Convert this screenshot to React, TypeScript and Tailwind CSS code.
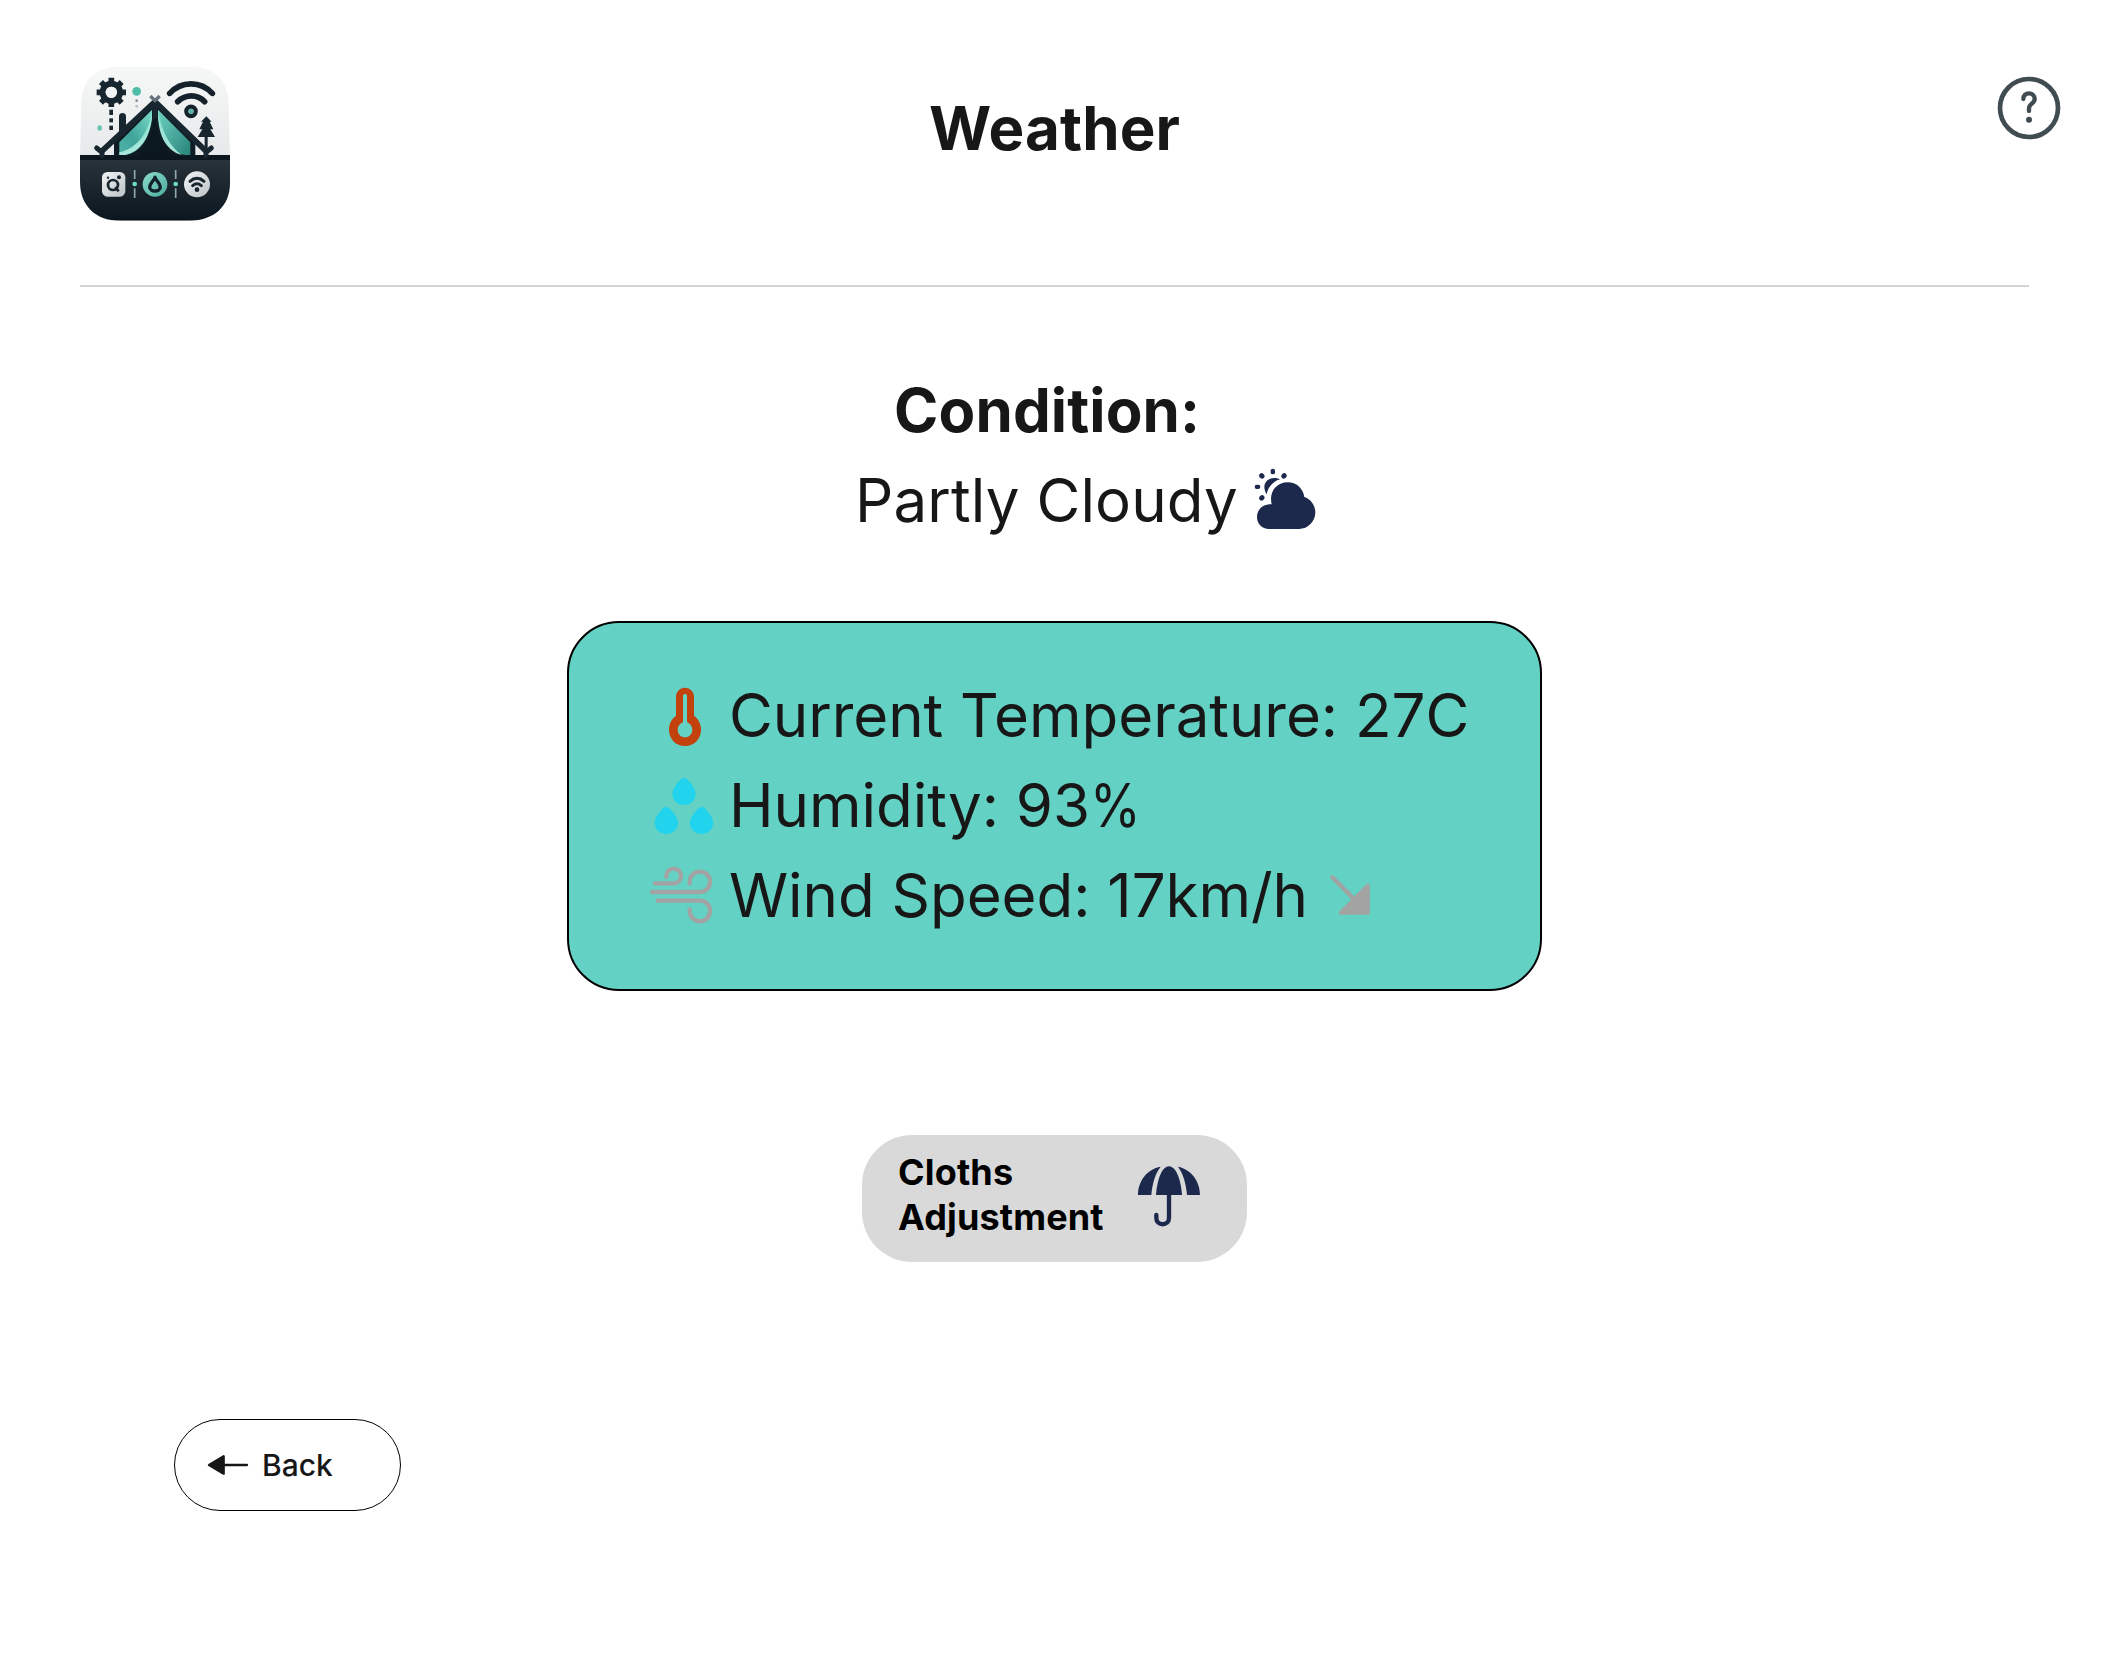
import React from "react";

function Logo() {
  return (
    <svg viewBox="27 27 456 474" className="h-[158px] w-[152px]">
      <defs>
        <linearGradient id="sky" x1="0" y1="0" x2="0" y2="1">
          <stop offset="0" stopColor="#f7f8f8" />
          <stop offset="1" stopColor="#e6e9ea" />
        </linearGradient>
        <linearGradient id="ground" x1="0" y1="0" x2="0" y2="1">
          <stop offset="0" stopColor="#2b353d" />
          <stop offset="1" stopColor="#0a151d" />
        </linearGradient>
        <linearGradient id="tentL" x1="1" y1="0" x2="0" y2="1">
          <stop offset="0" stopColor="#7edccb" />
          <stop offset="0.6" stopColor="#3fa59c" />
          <stop offset="1" stopColor="#4fb3a8" />
        </linearGradient>
        <linearGradient id="tentR" x1="0" y1="0" x2="1" y2="1">
          <stop offset="0" stopColor="#6fd3c3" />
          <stop offset="1" stopColor="#278379" />
        </linearGradient>
        <linearGradient id="flap" x1="0" y1="0" x2="0" y2="1">
          <stop offset="0" stopColor="#8ce0d0" />
          <stop offset="1" stopColor="#a9e8da" />
        </linearGradient>
        <linearGradient id="mint" x1="0" y1="0" x2="1" y2="1">
          <stop offset="0" stopColor="#8bdccb" />
          <stop offset="1" stopColor="#4bab9c" />
        </linearGradient>
        <linearGradient id="silver" x1="0" y1="0" x2="1" y2="1">
          <stop offset="0" stopColor="#f3f5f6" />
          <stop offset="1" stopColor="#bcc2c6" />
        </linearGradient>
        <clipPath id="badge">
          <path d="M150 35H360C435 35 476 75 476 150L480 305V385C480 455 430 497 360 497H150C75 497 30 450 30 380V305L34 150C34 75 75 35 150 35Z" />
        </clipPath>
      </defs>
      <g clipPath="url(#badge)">
        <rect x="27" y="27" width="456" height="280" fill="url(#sky)" />
        <rect x="27" y="300" width="456" height="200" fill="url(#ground)" />
        <rect x="27" y="300" width="456" height="15" fill="#0b161f" />
      </g>
      {/* gear with its dashed stem */}
      <circle cx="124" cy="112" r="26" fill="none" stroke="#18262f" strokeWidth="18" />
      <g stroke="#18262f" strokeWidth="17" strokeLinecap="butt">
        <path d="M124 84V68M124 140V156M96 112H80M152 112H168M104 92L93 81M144 92L155 81M104 132L93 143M144 132L155 143" />
      </g>
      <circle cx="124" cy="112" r="17" fill="#f1f3f4" />
      <g fill="#18262f">
        <rect x="118" y="164" width="11" height="16" />
        <rect x="118" y="190" width="11" height="12" />
        <rect x="118" y="212" width="11" height="13" />
      </g>
      <circle cx="200" cy="109" r="13" fill="#4fbda9" />
      <circle cx="200" cy="137" r="4" fill="#82909a" />
      <circle cx="200" cy="154" r="4" fill="#b4bdc2" />
      <ellipse cx="89" cy="219" rx="7" ry="8" fill="#6cc5b4" />
      {/* wifi waves */}
      <g fill="none" stroke="#15222b" strokeLinecap="round" strokeWidth="17">
        <path d="M299 115C334 77 392 77 427 115" />
        <path d="M323 140C347 117 382 117 404 140" />
        <circle cx="363" cy="169" r="14" strokeWidth="13" />
      </g>
      <circle cx="363" cy="169" r="8" fill="#5db4a6" />
      {/* tent */}
      <path d="M147 232V184C147 171 168 171 168 184V212Z" fill="#18262f" />
      <path d="M255 140L132 262V302H376V262Z" fill="#101c24" />
      <path d="M246 164L148 262V300H165C218 290 246 235 246 164Z" fill="url(#tentL)" />
      <path d="M246 164V190C240 245 212 292 165 300H148V292C205 280 240 225 246 164Z" fill="url(#flap)" />
      <path d="M264 164L361 262V300H345C292 290 264 235 264 164Z" fill="url(#tentR)" />
      <path d="M264 164C272 225 300 275 335 300C285 285 262 235 264 164Z" fill="url(#flap)" />
      <path d="M255 188C248 240 226 280 200 301H310C282 280 262 240 255 188Z" fill="#0c1820" />
      <g fill="none" stroke="#18262f" strokeWidth="17">
        <path d="M94 290L255 140L410 290" />
        <path d="M255 140V190" strokeWidth="13" />
      </g>
      <path d="M241 123L258 140M269 123L252 140" stroke="#66737b" strokeWidth="10" />
      <path d="M80 279L96 292V302M424 279L408 292V302" fill="none" stroke="#18262f" strokeWidth="15" strokeLinecap="round" />
      {/* pine */}
      <g fill="#18262f">
        <path d="M409 184L425 200H419L430 223H421L435 246H383L397 223H388L399 200H393Z" />
        <rect x="404" y="240" width="9" height="45" />
      </g>
      {/* bottom badges */}
      <rect x="96" y="351" width="70" height="74" rx="16" fill="url(#silver)" />
      <circle cx="129" cy="390" r="15" fill="none" stroke="#18262f" strokeWidth="8" />
      <path d="M136 396L146 409" stroke="#18262f" strokeWidth="8" />
      <circle cx="147" cy="367" r="6" fill="#18262f" />
      <circle cx="114" cy="368" r="3.500" fill="#18262f" />
      <circle cx="255" cy="388" r="37" fill="url(#mint)" />
      <path d="M255 367C250 380 239 386 239 396C239 412 271 412 271 396C271 386 260 380 255 367Z" fill="none" stroke="#12202a" strokeWidth="10" strokeLinejoin="round" />
      <circle cx="381" cy="388" r="39" fill="url(#silver)" />
      <g fill="none" stroke="#18262f" strokeWidth="9" strokeLinecap="round">
        <path d="M360 379C373 367 389 367 402 379" />
        <path d="M368 392C376 385 386 385 394 392" />
      </g>
      <circle cx="381" cy="404" r="7" fill="#18262f" />
      {[194, 317].map((x) => (
        <g key={x}>
          <path d={`M${x} 345V372M${x} 400V429`} stroke="#8fa9ad" strokeWidth="5" />
          <circle cx={x} cy="387" r="7" fill="#6ddcc7" />
        </g>
      ))}
    </svg>
  );
}

function HelpIcon() {
  return (
    <svg viewBox="51 45 192 198" className="h-[66px] w-[64px]">
      <circle cx="147" cy="144" r="87" fill="none" stroke="#414b52" strokeWidth="14" />
      <path d="M130 117C130 106 137 100 147 100C157 100 164 107 164 117C164 131 147 131 147 145V153" fill="none" stroke="#414b52" strokeWidth="13" strokeLinecap="round" strokeLinejoin="round" />
      <circle cx="147" cy="179" r="9" fill="#414b52" />
    </svg>
  );
}

function CloudSunIcon() {
  return (
    <svg viewBox="1242 294 186 186" className="h-[62px] w-[62px]" fill="#1c284c">
      <rect x="1292" y="296" width="13" height="17" rx="6.5" />
      <rect x="1244" y="344" width="17" height="13" rx="6.5" />
      <rect x="-8.500" y="-7.500" width="17" height="15" rx="7" transform="translate(1265.500 317.500) rotate(45)" />
      <rect x="-8.500" y="-7.500" width="17" height="15" rx="7" transform="translate(1332 317.500) rotate(-45)" />
      <rect x="-8.500" y="-7.500" width="17" height="15" rx="7" transform="translate(1265.500 383.500) rotate(-45)" />
      <path d="M1280 373C1265 350 1275 324 1303 324C1310 324 1316 326 1320 328C1300 334 1284 350 1280 373Z" />
      <path d="M1295 403C1286 365 1310 337 1343 337C1369 337 1389 355 1393 381C1412 387 1426 406 1426 427C1426 455 1404 477 1377 477H1287C1266 477 1251 461 1251 441C1251 417 1270 402 1295 403Z" />
    </svg>
  );
}

function ThermometerIcon() {
  return (
    <svg viewBox="294 180 204 270" className="h-[90px] w-[68px] shrink-0">
      <path fillRule="evenodd" fill="#c2410c" d="M405 233C390 233 378 245 378 260V317C365 326 357 342 357 359C357 387 378 408 405 408C432 408 453 387 453 359C453 342 445 326 432 317V260C432 245 420 233 405 233ZM399 258C399 250 411 250 411 258V336C421 341 427 349 427 359C427 372 417 382 405 382C393 382 383 372 383 359C383 349 389 341 399 336Z" />
    </svg>
  );
}

function DropletsIcon() {
  return (
    <svg viewBox="294 450 204 270" className="h-[90px] w-[68px] shrink-0" fill="#22d3ee">
      <path d="M402 503C411 503 437 532 437 551C437 571 421 585 402 585C383 585 367 571 367 551C367 532 393 503 402 503Z" />
      <path d="M349 590C358 590 384 619 384 638C384 658 368 672 349 672C330 672 314 658 314 638C314 619 340 590 349 590Z" />
      <path d="M454.500 590C463.500 590 489.500 619 489.500 638C489.500 658 473.500 672 454.500 672C435.500 672 419.500 658 419.500 638C419.500 619 445.500 590 454.500 590Z" />
    </svg>
  );
}

function WindIcon() {
  return (
    <svg viewBox="294 720 204 270" className="h-[90px] w-[68px] shrink-0" fill="none" stroke="#a3a3a3" strokeWidth="13" strokeLinecap="round">
      <path d="M349 801V798C349 785 359 776 371 776C384 776 393 786 393 798C393 811 384 820 371 820H315" />
      <path d="M419 820V815C419 798 433 785 450 785C467 785 480 798 480 815C480 833 467 846 450 846H306" />
      <path d="M323 872H450C467 872 480 885 480 903C480 920 467 934 450 934C433 934 419 920 419 903V898" />
    </svg>
  );
}

function WindDirectionIcon() {
  return (
    <svg viewBox="864 720 132 270" className="h-[90px] w-[44px] shrink-0" fill="#a3a3a3" stroke="#a3a3a3" strokeLinecap="round" strokeLinejoin="round">
      <path d="M877 802L945 870" strokeWidth="13" />
      <path d="M983 828V908H903Z" strokeWidth="13" />
    </svg>
  );
}

function UmbrellaIcon() {
  return (
    <svg viewBox="861 135 192 189" className="h-[63px] w-[64px]" fill="#1c284c">
      <path d="M932 140C916 160 907 190 904 225H864C864 182 892 147 932 140Z" />
      <path d="M984 140C1024 148 1050 184 1050 225H1011C1008 190 999 160 984 140Z" />
      <path d="M918 225C921 182 935 139 957 139C979 139 993 182 996 225Z" />
      <path d="M957 222V294C957 319 919 319 919 294V285" fill="none" stroke="#1c284c" strokeWidth="13" strokeLinecap="round" />
    </svg>
  );
}

function BackArrowIcon() {
  return (
    <svg viewBox="141 162 126 66" className="h-[22px] w-[42px]" fill="#171717" stroke="#171717" strokeWidth="7" strokeLinecap="round" strokeLinejoin="round">
      <path d="M190 195H261" />
      <path d="M147 195L191 169V221Z" />
    </svg>
  );
}

function Reading({ icon, children }: { icon: React.ReactNode; children: React.ReactNode }) {
  return (
    <li className="flex h-[90px] items-center gap-[13px] tracking-[-0.04px] whitespace-nowrap">
      {icon}
      {children}
    </li>
  );
}

export default function App() {
  return (
    <div className="flex h-[1675px] w-[2125px] flex-col items-start overflow-hidden bg-white font-['Inter',sans-serif] text-[60px] leading-[90px] text-[#171717]">
      <header className="flex h-[285px] w-full items-start pr-[64px] pl-[79px]">
        <div className="mt-[64px] w-[850px]">
          <Logo />
        </div>
        <h1 className="mt-[83px] font-bold tracking-[0.15px]">Weather</h1>
        <button className="mt-[75px] ml-auto" aria-label="Help">
          <HelpIcon />
        </button>
      </header>
      <hr className="ml-[80px] h-[2px] w-[1949px] border-0 bg-[#d4d4d4]" />

      <section className="mt-[78px] ml-[855px]">
        <h2 className="ml-[39px] font-bold tracking-[0.12px]">Condition:</h2>
        <div className="flex items-start">
          <p className="w-[399px] tracking-[0.13px] whitespace-nowrap">Partly Cloudy</p>
          <div className="mt-[13px]">
            <CloudSunIcon />
          </div>
        </div>
      </section>

      <ul className="mt-[76px] ml-[567px] h-[370px] w-[975px] rounded-[52px] border-2 border-black bg-[#63d1c3] pt-[47px] pl-[79px]">
        <Reading icon={<ThermometerIcon />}>Current Temperature: 27C</Reading>
        <Reading icon={<DropletsIcon />}>
          <span>
            Humidity: 93<span className="inline-block origin-left scale-x-[0.86]">%</span>
          </span>
        </Reading>
        <Reading icon={<WindIcon />}>
          <span className="w-[586px]">Wind Speed: 17km/h</span>
          <WindDirectionIcon />
        </Reading>
      </ul>

      <button className="mt-[144px] ml-[862px] flex h-[127px] w-[385px] items-start rounded-[50px] bg-[#d9d9d9] pt-[15px] pl-[36px] text-left text-[36px] leading-[45px] font-bold tracking-[0.15px] text-black">
        <span className="w-[239px]">
          Cloths
          <br />
          Adjustment
        </span>
        <span className="mt-[15px]">
          <UmbrellaIcon />
        </span>
      </button>

      <button className="mt-[157px] ml-[174px] flex h-[92px] w-[227px] items-center gap-[13px] rounded-[46px] border border-black pl-[32px] text-[30px] leading-[45px] font-medium">
        <BackArrowIcon />
        Back
      </button>
    </div>
  );
}
